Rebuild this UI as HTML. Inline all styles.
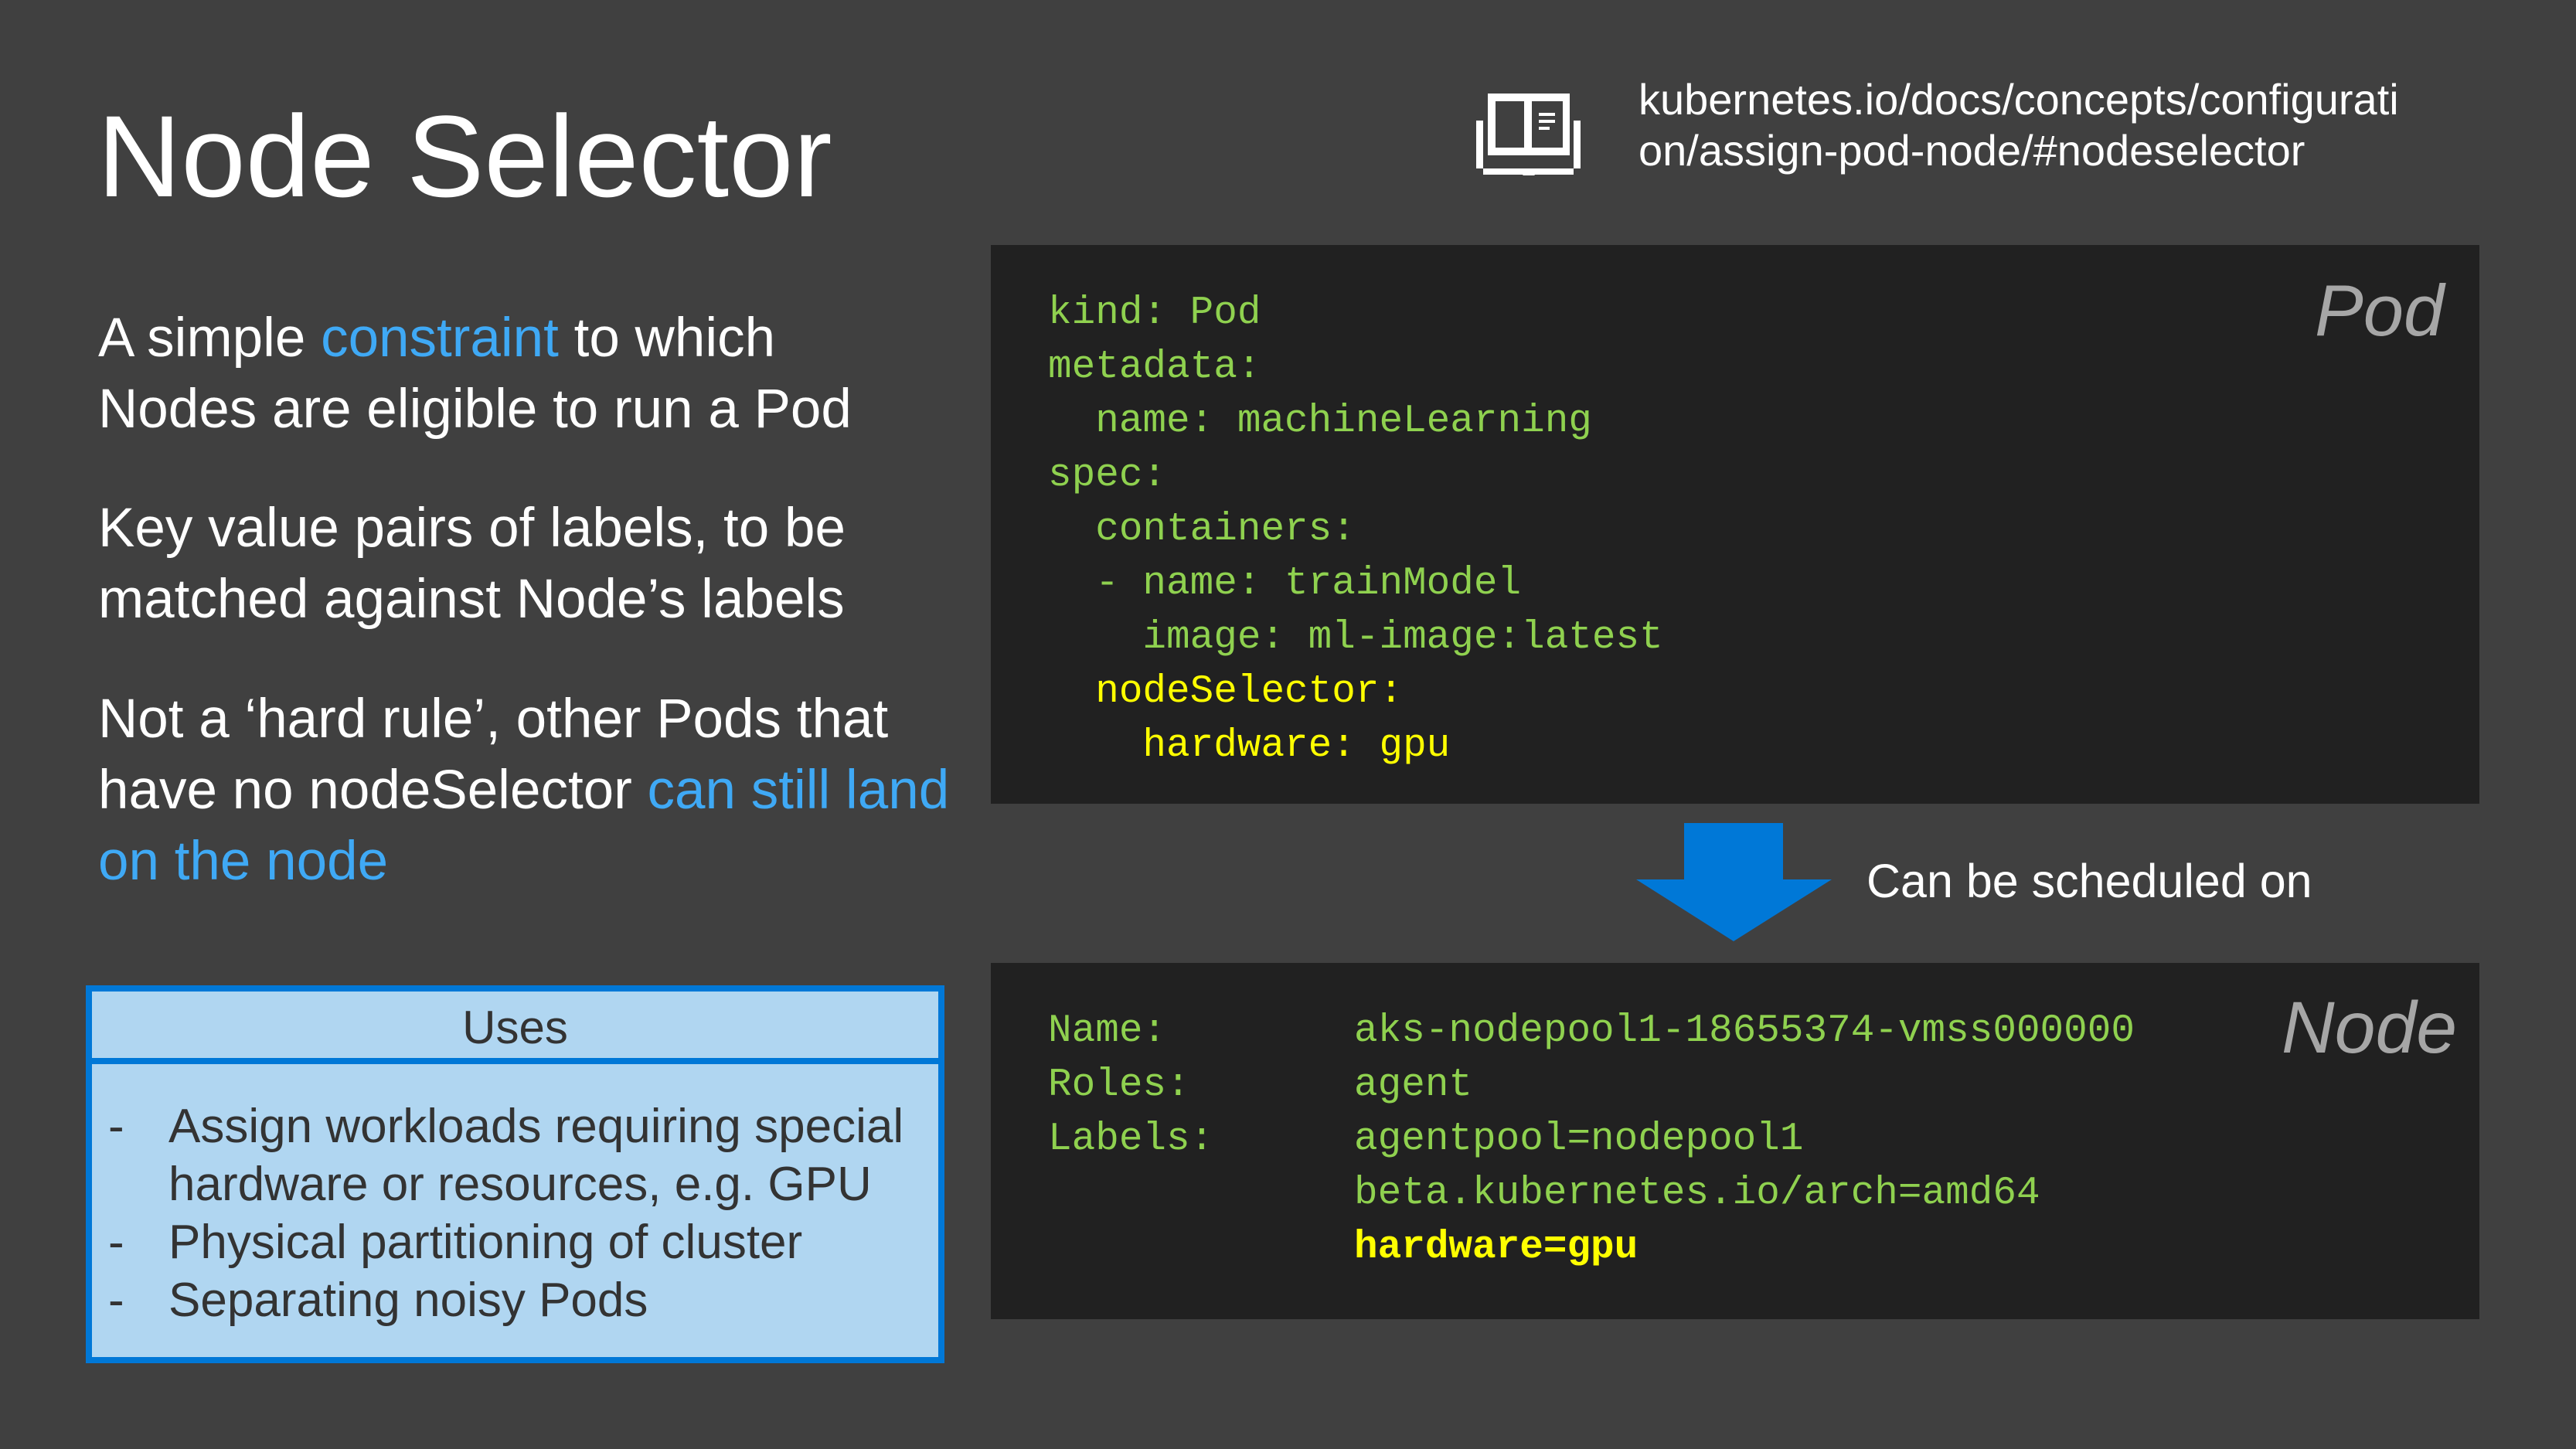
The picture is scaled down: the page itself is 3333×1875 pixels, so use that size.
<!DOCTYPE html>
<html><head><meta charset="utf-8"><style>
*{margin:0;padding:0;box-sizing:border-box}
body{width:3333px;height:1875px;background:#404040;position:relative;overflow:hidden;font-family:"Liberation Sans",sans-serif;color:#fff}
.a{position:absolute;white-space:pre}
.t{font-size:71px;line-height:92px}
.b{color:#3fa9f5}
.m{font-family:"Liberation Mono",monospace;font-size:51px;line-height:70px;color:#8fd14f}
.y{color:#ffff00}
.code{position:absolute;background:#212121}
</style></head><body>
<div class="a" style="left:126px;top:112px;font-size:150px;line-height:180px">Node Selector</div>

<div class="a t" style="left:127px;top:392px">A simple <span class="b">constraint</span> to which
Nodes are eligible to run a Pod</div>
<div class="a t" style="left:127px;top:638px">Key value pairs of labels, to be
matched against Node’s labels</div>
<div class="a t" style="left:127px;top:885px">Not a ‘hard rule’, other Pods that
have no nodeSelector <span class="b">can still land</span>
<span class="b">on the node</span></div>

<div style="position:absolute;left:111px;top:1275px;width:1111px;height:489px;background:#b0d6f1;border:8px solid #0078d7"></div>
<div style="position:absolute;left:111px;top:1369px;width:1111px;height:8px;background:#0078d7"></div>
<div class="a" style="left:111px;top:1290px;width:1111px;text-align:center;color:#333;font-size:60px;line-height:80px">Uses</div>
<div class="a" style="left:140px;top:1420px;color:#333;font-size:62px;line-height:75px">-

-
-</div>
<div class="a" style="left:218px;top:1420px;color:#333;font-size:62px;line-height:75px">Assign workloads requiring special
hardware or resources, e.g. GPU
Physical partitioning of cluster
Separating noisy Pods</div>

<svg class="a" style="left:1905px;top:115px" width="145" height="112" viewBox="1905 115 145 112">
<g fill="#fff">
<path d="M1910 166h9v70h-9z M2036 166h9v70h-9z M1910 236h60 l4 5h8l4-5h59v-8h-135z" transform="translate(0,-10)"/>
<path d="M1925 121h106v80h-106z M1935 131v60h37v-60z M1982 131v60h40v-60z" fill-rule="evenodd"/>
<rect x="1991" y="146" width="21" height="4"/><rect x="1991" y="155" width="21" height="4"/><rect x="1991" y="164" width="14" height="4"/>
</g></svg>
<div class="a" style="left:2120px;top:96px;font-size:56px;line-height:66px">kubernetes.io/docs/concepts/configurati
on/assign-pod-node/#nodeselector</div>

<div class="code" style="left:1282px;top:317px;width:1926px;height:723px"></div>
<div class="a m" style="left:1356px;top:371px">kind: Pod
metadata:
  name: machineLearning
spec:
  containers:
  - name: trainModel
    image: ml-image:latest
<span class="y">  nodeSelector:
    hardware: gpu</span></div>
<div class="a" style="left:2995px;top:342px;font-size:94px;line-height:120px;font-style:italic;color:#a6a6a6">Pod</div>

<svg class="a" style="left:2115px;top:1063px" width="258" height="158" viewBox="0 0 258 158"><path d="M64 2h128v73h63l-127 80l-126-80h62z" fill="#0078d7"/></svg>
<div class="a" style="left:2415px;top:1100px;font-size:61px;line-height:80px">Can be scheduled on</div>

<div class="code" style="left:1282px;top:1246px;width:1926px;height:461px"></div>
<div class="a m" style="left:1356px;top:1300px">Name:
Roles:
Labels:</div>
<div class="a m" style="left:1752px;top:1300px">aks-nodepool1-18655374-vmss000000
agent
agentpool=nodepool1
beta.kubernetes.io/arch=amd64
<b class="y">hardware=gpu</b></div>
<div class="a" style="left:2952px;top:1270px;font-size:95px;line-height:120px;font-style:italic;color:#a6a6a6">Node</div>
</body></html>
